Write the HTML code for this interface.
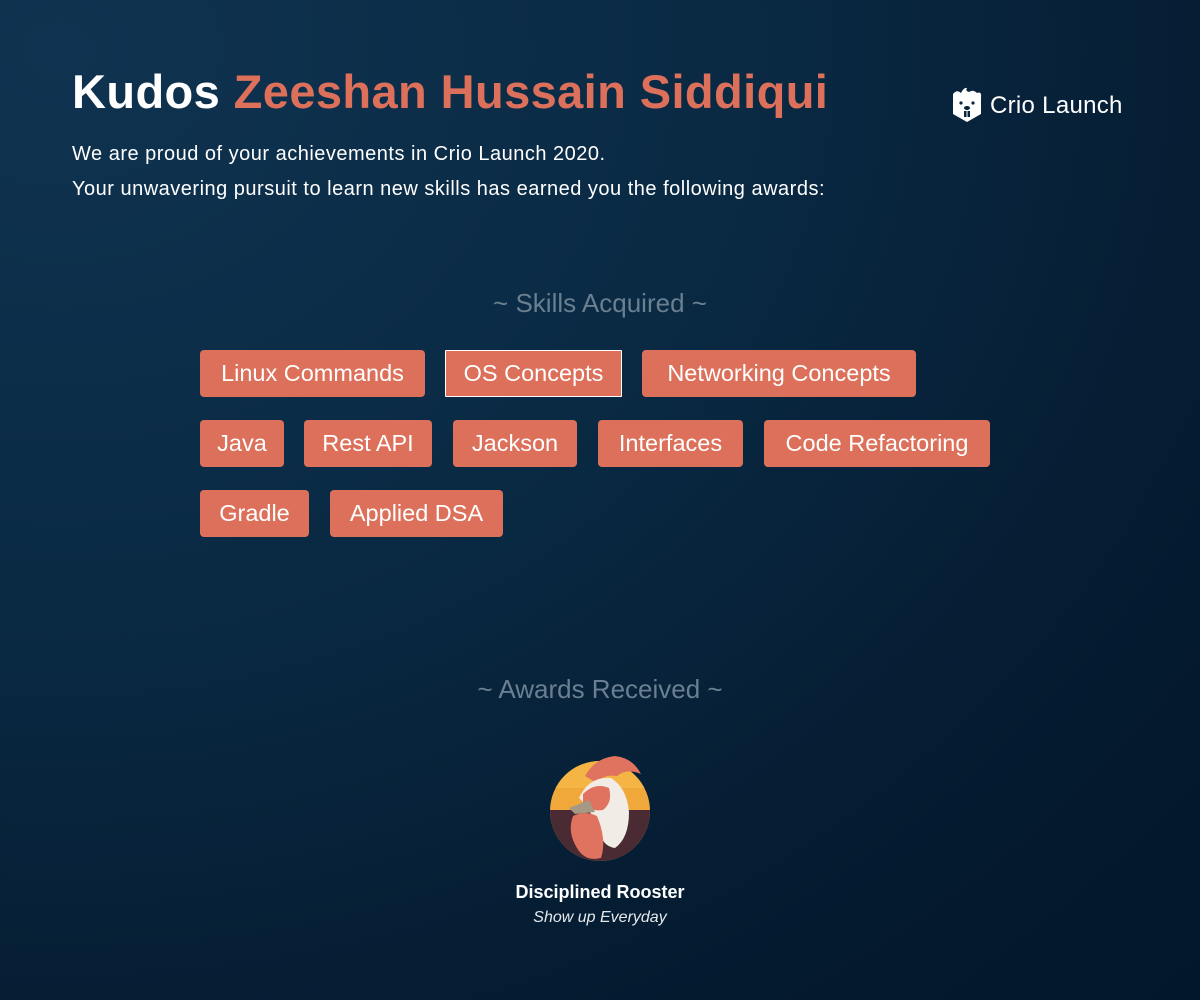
<!DOCTYPE html>
<html><head><meta charset="utf-8"><style>
html,body{margin:0;padding:0}
body{width:1200px;height:1000px;position:relative;overflow:hidden;font-family:"Liberation Sans",sans-serif;
background:radial-gradient(ellipse at 5% 5%,#0f3350 0%,#0a2a44 40%,#041a2f 80%,#03172a 100%);color:#fff}
.t{position:absolute;white-space:nowrap}
.tag{position:absolute;height:47px;line-height:47px;background:#dc705a;border-radius:4px;color:#fff;font-size:23.5px;text-align:center}
.h{color:#6a7f90;font-size:26px;width:1200px;text-align:center;left:0}
</style></head><body>
<div class="t" style="left:72px;top:64px;font-size:47px;font-weight:bold;letter-spacing:0.4px">Kudos <span style="color:#dc705a">Zeeshan Hussain Siddiqui</span></div>
<div class="t" style="left:72px;top:143px;font-size:20px;letter-spacing:0.5px">We are proud of your achievements in Crio Launch 2020.</div>
<div class="t" style="left:72px;top:178px;font-size:20px;letter-spacing:0.5px">Your unwavering pursuit to learn new skills has earned you the following awards:</div>
<svg class="t" style="left:949px;top:86px" width="36" height="38" viewBox="0 0 36 38">
<path d="M4 8 Q8 3 12 7 Q15 1 18 2 Q16 5 20 6 Q24 3 28 7 Q33 5 32 12 L32 28 L18 36 L4 28 L4 12 Z" fill="#fff"/>
<circle cx="12" cy="17" r="1.6" fill="#0a2338"/><circle cx="24" cy="17" r="1.6" fill="#0a2338"/>
<ellipse cx="18" cy="22" rx="3" ry="2" fill="#0a2338"/><rect x="15" y="25" width="6" height="6" fill="#0a2338"/><rect x="17.5" y="25" width="1" height="6" fill="#fff"/>
</svg>
<div class="t" style="left:990px;top:92px;font-size:24px;font-weight:500;letter-spacing:0.3px">Crio Launch</div>
<div class="t h" style="top:288px">~ Skills Acquired ~</div>
<div class="tag" style="left:200px;top:350px;width:225px">Linux Commands</div>
<div class="tag" style="left:445px;top:350px;width:175px;border:1px solid #fff;border-radius:1px;height:45px;line-height:45px">OS Concepts</div>
<div class="tag" style="left:642px;top:350px;width:274px">Networking Concepts</div>
<div class="tag" style="left:200px;top:420px;width:84px">Java</div>
<div class="tag" style="left:304px;top:420px;width:128px">Rest API</div>
<div class="tag" style="left:453px;top:420px;width:124px">Jackson</div>
<div class="tag" style="left:598px;top:420px;width:145px">Interfaces</div>
<div class="tag" style="left:764px;top:420px;width:226px">Code Refactoring</div>
<div class="tag" style="left:200px;top:490px;width:109px">Gradle</div>
<div class="tag" style="left:330px;top:490px;width:173px">Applied DSA</div>
<div class="t h" style="top:674px">~ Awards Received ~</div>
<svg class="t" style="left:545px;top:748px" width="110" height="116" viewBox="0 0 110 116">
<defs><clipPath id="c"><circle cx="55" cy="63" r="50"/></clipPath></defs>
<g clip-path="url(#c)">
<rect x="0" y="0" width="110" height="116" fill="#f0a83a"/>
<rect x="0" y="10" width="110" height="30" fill="#f4b545"/>
<rect x="0" y="62" width="110" height="60" fill="#4a2b33"/>
</g>
<path d="M40 28 Q50 10 70 8 Q88 10 96 26 Q82 20 72 28 Q60 26 50 34 Z" fill="#e0735f"/>
<path d="M34 50 Q44 28 66 30 Q82 40 84 64 Q84 90 70 100 Q56 98 54 80 Q46 70 44 60 Z" fill="#f1ece6"/>
<path d="M38 46 Q50 34 64 40 Q68 54 58 62 Q46 64 38 56 Z" fill="#e0735f"/>
<path d="M44 52 L24 60 L30 66 L50 64 Z" fill="#a59884"/>
<path d="M28 68 Q40 62 52 68 Q62 92 56 110 Q40 114 32 100 Q22 84 28 68 Z" fill="#e0735f"/>
</svg>
<div class="t" style="left:0;width:1200px;text-align:center;top:882px;font-size:18px;font-weight:bold">Disciplined Rooster</div>
<div class="t" style="left:0;width:1200px;text-align:center;top:909px;font-size:16px;font-style:italic;color:#e6e9ec">Show up Everyday</div>
</body></html>
